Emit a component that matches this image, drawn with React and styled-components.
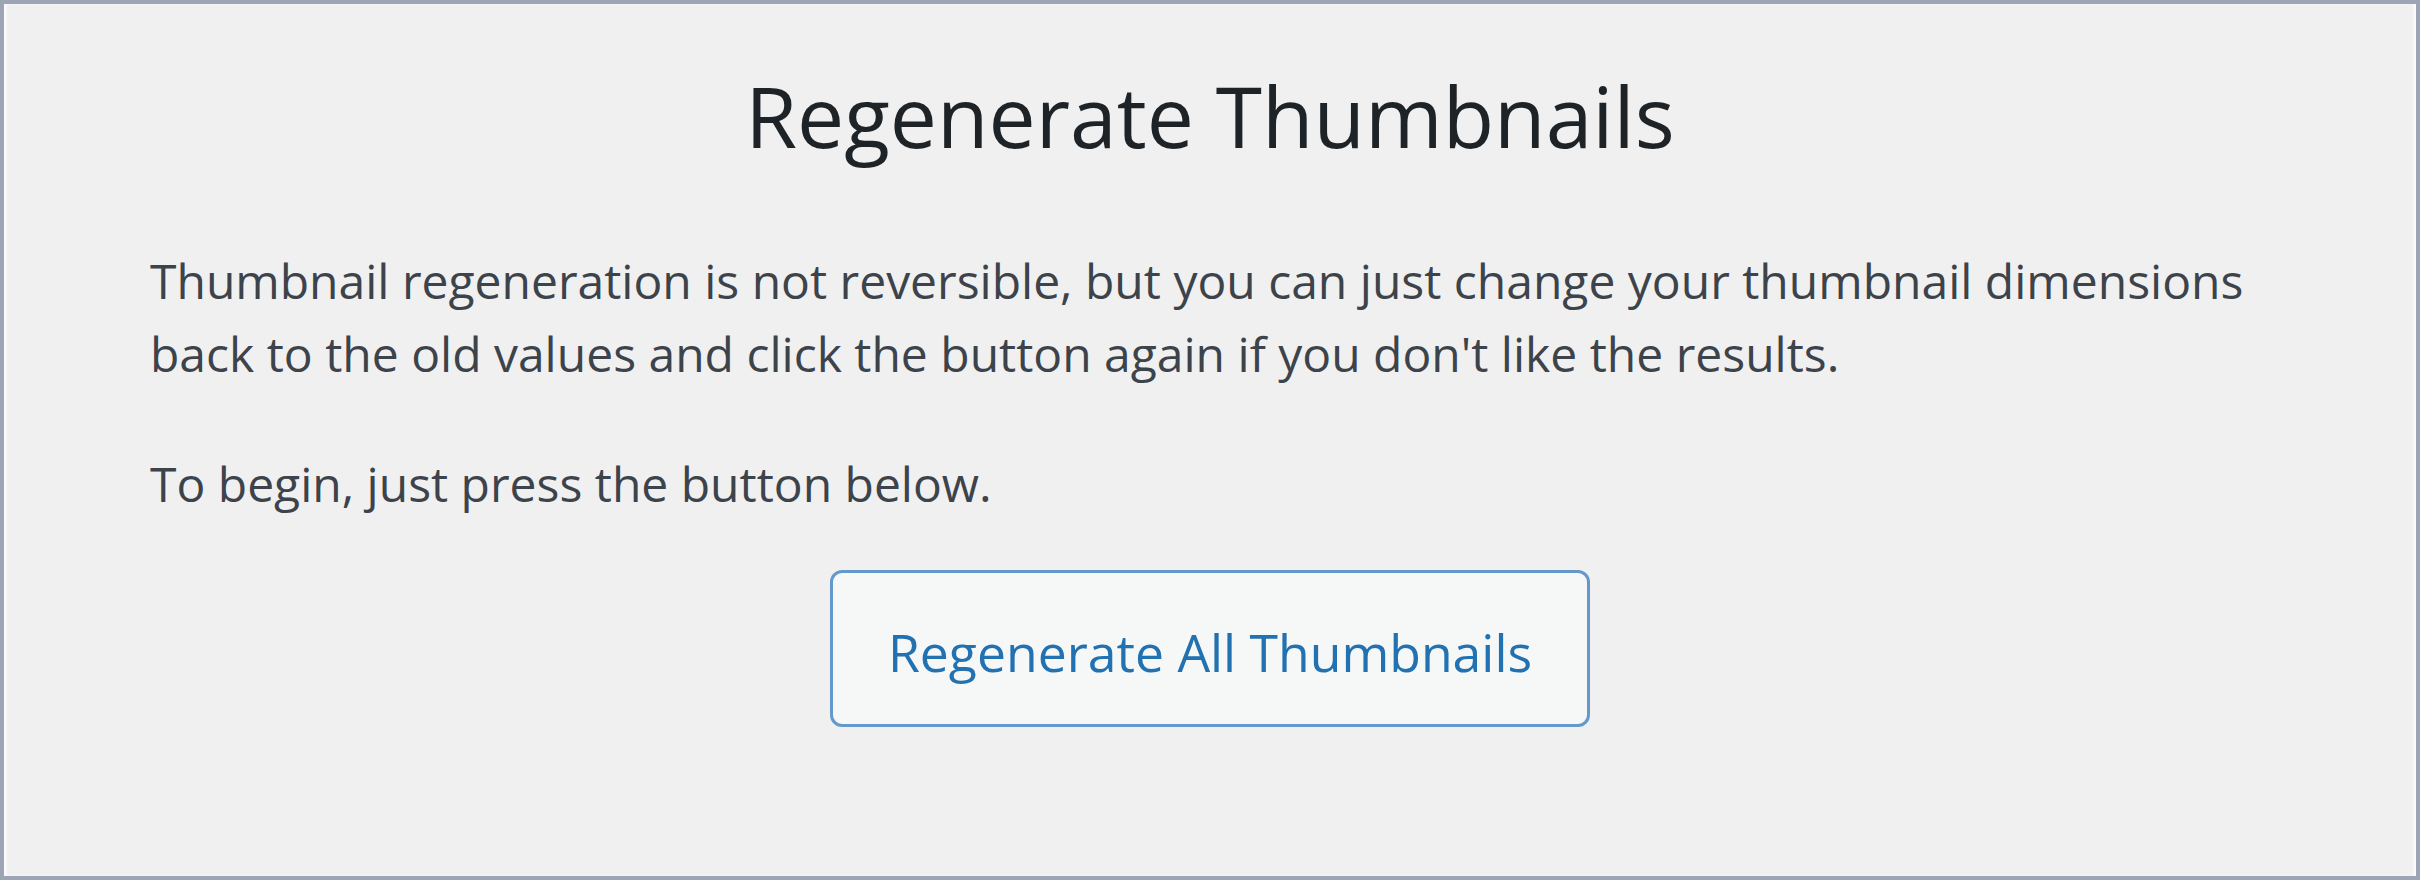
import React from "react";
import styled, { createGlobalStyle } from "styled-components";

const GlobalStyle = createGlobalStyle`
  html, body {
    margin: 0;
    padding: 0;
    background: #f0f0f1;
  }
  * {
    box-sizing: border-box;
  }
`;

const Frame = styled.div`
  width: 2420px;
  height: 880px;
  border: 4px solid #9da4b5;
  background: #f0f0f1;
  box-shadow: inset 3px 0 3px -1px rgba(255, 255, 255, 0.9),
    inset -3px 0 3px -1px rgba(255, 255, 255, 0.9);
  font-family: "Open Sans", "Noto Sans", sans-serif;
  padding: 70px 146px 0;
  display: flex;
  flex-direction: column;
`;

const Title = styled.h1`
  margin: 0 0 86px;
  font-size: 84px;
  line-height: 1;
  font-weight: 400;
  color: #1d2327;
  text-align: center;
`;

const Paragraph = styled.p`
  margin: ${(props) => props.$top || 0}px 0 0;
  font-size: 48px;
  line-height: 73px;
  color: #3c434a;
  white-space: nowrap;
`;

const Actions = styled.div`
  display: flex;
  justify-content: center;
  margin-top: 50px;
`;

const HeroButton = styled.button`
  font-family: inherit;
  font-size: 51.7px;
  line-height: 144px;
  padding: 7px 55px 0;
  border: 3px solid #6598cb;
  border-radius: 12px;
  background: #f6f7f7;
  color: #2271b1;
  cursor: pointer;
`;

function App() {
  return (
    <>
      <GlobalStyle />
      <Frame>
        <Title>Regenerate Thumbnails</Title>
        <Paragraph>
          Thumbnail regeneration is not reversible, but you can just change your thumbnail dimensions
          <br />
          back to the old values and click the button again if you don't like the results.
        </Paragraph>
        <Paragraph $top={57}>To begin, just press the button below.</Paragraph>
        <Actions>
          <HeroButton>Regenerate All Thumbnails</HeroButton>
        </Actions>
      </Frame>
    </>
  );
}

export default App;
